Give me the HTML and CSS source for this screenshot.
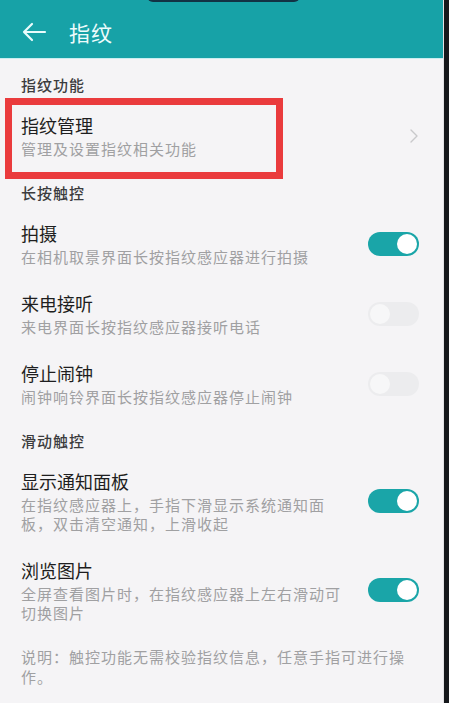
FILE: index.html
```html
<!DOCTYPE html>
<html lang="zh-CN">
<head>
<meta charset="utf-8">
<title>指纹</title>
<link rel="stylesheet" href="styles.css">
</head>
<body>
<div class="device">
  <div class="screen">
    <div class="notch"></div>
    <header class="appbar">
      <svg class="back" width="26" height="20" viewBox="0 0 26 20" aria-hidden="true">
        <path d="M24 10 H3 M11 2 L3 10 L11 18" fill="none" stroke="#eafcfc" stroke-width="2.2" stroke-linecap="round" stroke-linejoin="round"/>
      </svg>
      <h1 class="title">指纹</h1>
    </header>

    <div class="section-label first">指纹功能</div>
    <div class="row">
      <div class="texts">
        <div class="row-title">指纹管理</div>
        <div class="row-sub">管理及设置指纹相关功能</div>
      </div>
      <svg class="chevron" width="10" height="16" viewBox="0 0 10 16" aria-hidden="true">
        <path d="M2 2 L8 8 L2 14" fill="none" stroke="#c9c9cb" stroke-width="1.4" stroke-linecap="round" stroke-linejoin="round"/>
      </svg>
    </div>

    <div class="section-label">长按触控</div>
    <div class="row">
      <div class="texts">
        <div class="row-title">拍摄</div>
        <div class="row-sub">在相机取景界面长按指纹感应器进行拍摄</div>
      </div>
      <div class="toggle on"><span class="knob"></span></div>
    </div>
    <div class="row">
      <div class="texts">
        <div class="row-title">来电接听</div>
        <div class="row-sub">来电界面长按指纹感应器接听电话</div>
      </div>
      <div class="toggle off"><span class="knob"></span></div>
    </div>
    <div class="row">
      <div class="texts">
        <div class="row-title">停止闹钟</div>
        <div class="row-sub">闹钟响铃界面长按指纹感应器停止闹钟</div>
      </div>
      <div class="toggle off"><span class="knob"></span></div>
    </div>

    <div class="section-label">滑动触控</div>
    <div class="row">
      <div class="texts">
        <div class="row-title">显示通知面板</div>
        <div class="row-sub">在指纹感应器上，手指下滑显示系统通知面板，双击清空通知，上滑收起</div>
      </div>
      <div class="toggle on"><span class="knob"></span></div>
    </div>
    <div class="row">
      <div class="texts">
        <div class="row-title">浏览图片</div>
        <div class="row-sub">全屏查看图片时，在指纹感应器上左右滑动可切换图片</div>
      </div>
      <div class="toggle on"><span class="knob"></span></div>
    </div>

    <p class="note">说明：触控功能无需校验指纹信息，任意手指可进行操作。</p>

    <div class="highlight"></div>
  </div>
  <div class="bezel"></div>
</div>
</body>
</html>
```

FILE: styles.css
```css
* {
  box-sizing: border-box;
}

html, body {
  margin: 0;
  padding: 0;
  background: #f5f4f6;
}

body {
  font-family: "Noto Sans CJK SC", "Noto Sans", sans-serif;
}

.device {
  display: flex;
  width: 449px;
  min-height: 703px;
}

.screen {
  position: relative;
  width: 443px;
  min-height: 703px;
  background: #f5f4f6;
  overflow: hidden;
}

.bezel {
  width: 6px;
  background: #15181b;
  border-left: 1px solid #e2e2e4;
}

.notch {
  position: absolute;
  left: 147px;
  top: -6px;
  width: 153px;
  height: 8px;
  border-radius: 0 0 6px 6px;
  background: #123244;
}

.appbar {
  display: flex;
  align-items: center;
  height: 59px;
  padding: 6px 0 0 21px;
  background: #17a2a7;
  border-bottom: 1px solid #c9eef0;
}

.back {
  display: block;
  flex: none;
}

.title {
  margin: 0 0 0 22px;
  font-size: 21px;
  font-weight: 400;
  line-height: 28px;
  color: #eefcfc;
  letter-spacing: 1px;
}

.section-label {
  padding: 12px 21px 6px;
  font-size: 15px;
  line-height: 20px;
  font-weight: 500;
  color: #3c3c3e;
  letter-spacing: 1px;
}

.section-label.first {
  padding-top: 16px;
}

.row {
  display: flex;
  align-items: center;
  justify-content: space-between;
  padding: 12px 24px 13px 21px;
}

.texts {
  width: 330px;
}

.row-title {
  font-size: 18px;
  line-height: 24px;
  color: #1e1e20;
}

.row-sub {
  margin-top: 2px;
  font-size: 15px;
  line-height: 19px;
  color: #a0a0a2;
  letter-spacing: 1px;
}

.chevron {
  display: block;
}

.toggle {
  display: flex;
  align-items: center;
  flex: none;
  width: 51px;
  height: 24px;
  padding: 2px;
  border-radius: 12px;
}

.toggle.on {
  justify-content: flex-end;
  background: #1aa5a8;
}

.toggle.off {
  justify-content: flex-start;
  background: #ececee;
}

.knob {
  display: block;
  width: 20px;
  height: 20px;
  border-radius: 50%;
  background: #ffffff;
}

.toggle.off .knob {
  background: #f7f7f8;
}

.note {
  margin: 0;
  padding: 12px 21px 0;
  width: 434px;
  font-size: 15px;
  line-height: 20px;
  color: #a0a0a2;
  letter-spacing: 1px;
}

.highlight {
  position: absolute;
  left: 5px;
  top: 98px;
  width: 278px;
  height: 81px;
  border: 7px solid #ea3b3d;
}
```
